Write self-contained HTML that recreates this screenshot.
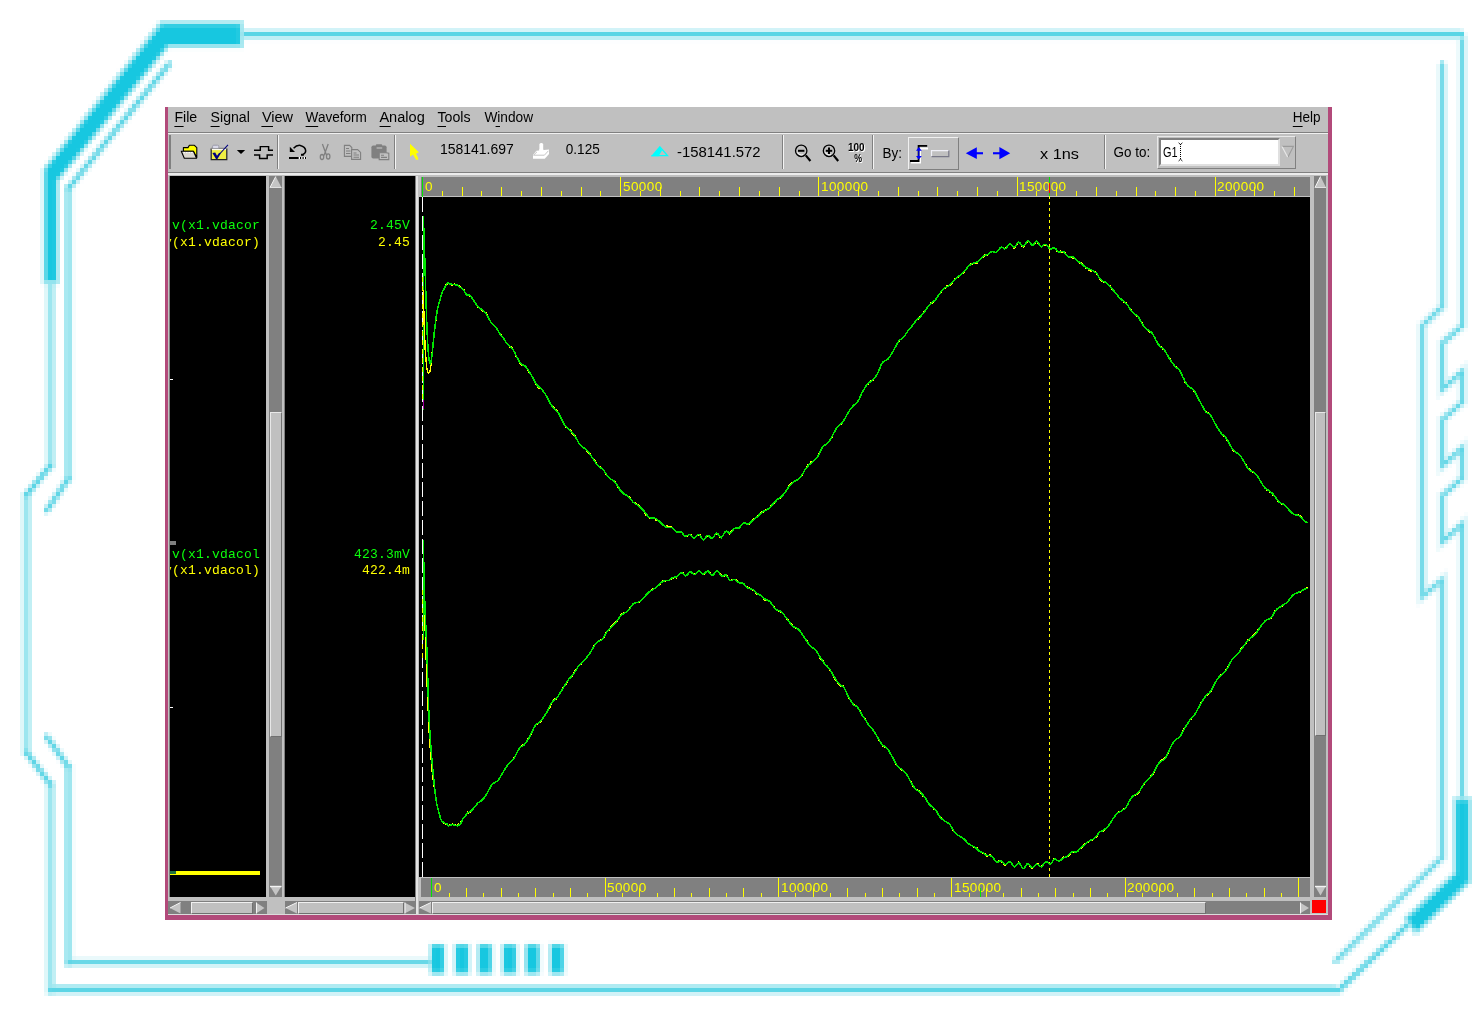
<!DOCTYPE html>
<html><head><meta charset="utf-8"><title>Waveform</title>
<style>html,body{margin:0;padding:0;background:#fff;}
body{width:1483px;height:1019px;position:relative;overflow:hidden;font-family:"Liberation Sans",sans-serif;}
.a{position:absolute;}
svg,.mono,.rl{will-change:transform;}
#win{left:165px;top:107px;width:1167px;height:813px;background:#b24a7a;}
#gray{left:168px;top:107px;width:1160px;height:808px;background:#c0c0c0;}
.menu{top:108px;font-size:14px;line-height:18px;color:#000;letter-spacing:0.55px;white-space:pre;}
.menu u{text-decoration:none;border-bottom:1px solid #000;}
.tb{font-size:13.5px;line-height:16px;color:#000;white-space:pre;letter-spacing:0.35px;}
.mono{font-family:"Liberation Mono",monospace;font-size:13px;line-height:15px;white-space:pre;letter-spacing:0.2px;}
.g{color:#0cff0c;}.y{color:#ffff00;}
.rl{font-size:13.5px;line-height:14px;color:#ffff00;white-space:pre;letter-spacing:0.4px;}
</style></head><body>
<svg class="a" style="left:0;top:0" width="1483" height="1019" viewBox="0 0 1483 1019">
<defs><filter id="pix" x="0" y="0" width="1484" height="1020" filterUnits="userSpaceOnUse" color-interpolation-filters="sRGB">
<feGaussianBlur in="SourceGraphic" stdDeviation="1.05" result="bl"/>
<feFlood x="1" y="1" width="1" height="1" flood-color="#000"/>
<feComposite width="4" height="4"/>
<feTile result="grid"/>
<feComposite in="bl" in2="grid" operator="in"/>
<feMorphology operator="dilate" radius="1" result="d"/>
<feOffset in="d" dx="1" dy="0" result="d1"/>
<feOffset in="d" dx="0" dy="1" result="d2"/>
<feOffset in="d" dx="1" dy="1" result="d3"/>
<feMerge><feMergeNode in="d"/><feMergeNode in="d1"/><feMergeNode in="d2"/><feMergeNode in="d3"/></feMerge>
</filter></defs>
<g filter="url(#pix)"><rect x="-8" y="-8" width="1500" height="1036" fill="#fff"/>
<polyline points="1462.0,36.0 1462.0,325.0 1462.0,325.0 1442.0,342.5 1442.0,388.5 1462.0,371.0 1462.0,401.5 1442.0,419.0 1442.0,465.0 1462.0,447.5 1462.0,477.5 1442.0,495.0 1442.0,541.0 1462.0,523.5 1462.0,800.0" fill="none" stroke="#e0f6fa" stroke-width="9.5" stroke-linejoin="miter" /><polyline points="1462.0,36.0 1462.0,325.0 1462.0,325.0 1442.0,342.5 1442.0,388.5 1462.0,371.0 1462.0,401.5 1442.0,419.0 1442.0,465.0 1462.0,447.5 1462.0,477.5 1442.0,495.0 1442.0,541.0 1462.0,523.5 1462.0,800.0" fill="none" stroke="#62d6e6" stroke-width="3.8" stroke-linejoin="miter" stroke-linecap="square"/>
<polyline points="240.0,34.0 1462.0,34.0" fill="none" stroke="#c6f0f6" stroke-width="11" stroke-linejoin="miter" /><polyline points="240.0,34.0 1462.0,34.0" fill="none" stroke="#4fd3e3" stroke-width="4" stroke-linejoin="miter" stroke-linecap="square"/>
<polyline points="1442.0,63.0 1442.0,306.0 1422.0,325.0 1422.0,595.6 1442.0,579.4 1442.0,856.6 1335.0,960.8" fill="none" stroke="#dcf5f9" stroke-width="9.5" stroke-linejoin="miter" /><polyline points="1442.0,63.0 1442.0,306.0 1422.0,325.0 1422.0,595.6 1442.0,579.4 1442.0,856.6 1335.0,960.8" fill="none" stroke="#6ad8e7" stroke-width="3.8" stroke-linejoin="miter" stroke-linecap="square"/>
<polyline points="50.0,280.0 50.0,465.0 26.0,494.5 26.0,752.0 50.0,784.0 50.0,990.0 1338.0,990.0 1408.0,923.5" fill="none" stroke="#cdf1f6" stroke-width="8.5" stroke-linejoin="miter" /><polyline points="50.0,280.0 50.0,465.0" fill="none" stroke="#9de6ef" stroke-width="7.2" stroke-linejoin="miter" stroke-linecap="square"/><polyline points="26.0,494.5 26.0,752.0" fill="none" stroke="#9de6ef" stroke-width="7.2" stroke-linejoin="miter" stroke-linecap="square"/><polyline points="50.0,784.0 50.0,990.0" fill="none" stroke="#9de6ef" stroke-width="7.2" stroke-linejoin="miter" stroke-linecap="square"/><polyline points="50.0,465.0 26.0,494.5" fill="none" stroke="#55d3e4" stroke-width="4" stroke-linejoin="miter" stroke-linecap="square"/><polyline points="26.0,752.0 50.0,784.0" fill="none" stroke="#55d3e4" stroke-width="4" stroke-linejoin="miter" stroke-linecap="square"/><polyline points="50.0,990.0 1338.0,990.0 1408.0,923.5" fill="none" stroke="#55d3e4" stroke-width="4" stroke-linejoin="miter" stroke-linecap="square"/>
<rect x="53" y="984" width="1282" height="4" fill="#a9e9f1"/>
<polyline points="169.0,63.0 68.0,188.0 68.0,478.0 45.7,510.7" fill="none" stroke="#cdf1f6" stroke-width="8.5" stroke-linejoin="miter" /><polyline points="68.0,188.0 68.0,478.0" fill="none" stroke="#9de6ef" stroke-width="7.2" stroke-linejoin="miter" stroke-linecap="square"/><polyline points="169.0,63.0 68.0,188.0" fill="none" stroke="#55d3e4" stroke-width="3.6" stroke-linejoin="miter" stroke-linecap="square"/><polyline points="68.0,478.0 45.7,510.7" fill="none" stroke="#55d3e4" stroke-width="3.6" stroke-linejoin="miter" stroke-linecap="square"/>
<polyline points="45.7,735.6 68.0,766.6 68.0,962.0 433.0,962.0" fill="none" stroke="#cdf1f6" stroke-width="8.5" stroke-linejoin="miter" /><polyline points="68.0,766.6 68.0,962.0" fill="none" stroke="#9de6ef" stroke-width="7.2" stroke-linejoin="miter" stroke-linecap="square"/><polyline points="45.7,735.6 68.0,766.6" fill="none" stroke="#55d3e4" stroke-width="3.6" stroke-linejoin="miter" stroke-linecap="square"/><polyline points="68.0,962.0 433.0,962.0" fill="none" stroke="#55d3e4" stroke-width="3.6" stroke-linejoin="miter" stroke-linecap="square"/>
<polygon points="243,20.5 159.5,20.5 42,168 42,284 58.5,284 58.5,181 168.5,47.5 243,47.5" fill="#9fe6ef"/>
<polygon points="239,24.5 161.5,24.5 45.5,169.5 45.5,280 55.5,280 55.5,179.5 167,44 239,44" fill="#17c7e0"/>
<polygon points="1452.8,796.8 1471,796.8 1471,882 1415.1,935.3 1402.4,917.6 1452.8,871.8" fill="#9fe6ef"/>
<polygon points="1456.3,800.5 1467.3,800.5 1467.3,880.4 1415.8,930 1407.4,918.4 1456.3,873.6" fill="#17c7e0"/>
<rect x="428.5" y="943" width="17" height="31" fill="#9fe6ef" opacity="0.7"/>
<rect x="431.5" y="943.5" width="11" height="30" fill="#52d6e6"/>
<rect x="431.5" y="947" width="11" height="23" fill="#17c7e0"/>
<rect x="453.0" y="943" width="17" height="31" fill="#9fe6ef" opacity="0.7"/>
<rect x="456.0" y="943.5" width="11" height="30" fill="#52d6e6"/>
<rect x="456.0" y="947" width="11" height="23" fill="#17c7e0"/>
<rect x="476.0" y="943" width="17" height="31" fill="#9fe6ef" opacity="0.7"/>
<rect x="479.0" y="943.5" width="11" height="30" fill="#52d6e6"/>
<rect x="479.0" y="947" width="11" height="23" fill="#17c7e0"/>
<rect x="500.5" y="943" width="17" height="31" fill="#9fe6ef" opacity="0.7"/>
<rect x="503.5" y="943.5" width="11" height="30" fill="#52d6e6"/>
<rect x="503.5" y="947" width="11" height="23" fill="#17c7e0"/>
<rect x="523.5" y="943" width="17" height="31" fill="#9fe6ef" opacity="0.7"/>
<rect x="526.5" y="943.5" width="11" height="30" fill="#52d6e6"/>
<rect x="526.5" y="947" width="11" height="23" fill="#17c7e0"/>
<rect x="548.0" y="943" width="17" height="31" fill="#9fe6ef" opacity="0.7"/>
<rect x="551.0" y="943.5" width="11" height="30" fill="#52d6e6"/>
<rect x="551.0" y="947" width="11" height="23" fill="#17c7e0"/>
</g>
</svg>
<div class="a" id="win"></div><div class="a" id="gray"></div>
<div class="a" style="left:168px;top:132px;width:1160px;height:1px;background:#808080;"></div>
<div class="a" style="left:168px;top:133px;width:1160px;height:1px;background:#f0f0f0;"></div>
<div class="a" style="left:168px;top:172px;width:1160px;height:1px;background:#808080;"></div>
<div class="a" style="left:168px;top:173px;width:1160px;height:2px;background:#ececec;"></div>
<div class="a" style="left:277px;top:135px;width:1px;height:34px;background:#808080;"></div>
<div class="a" style="left:278px;top:135px;width:1px;height:34px;background:#f4f4f4;"></div>
<div class="a" style="left:394px;top:135px;width:1px;height:34px;background:#808080;"></div>
<div class="a" style="left:395px;top:135px;width:1px;height:34px;background:#f4f4f4;"></div>
<div class="a" style="left:782px;top:135px;width:1px;height:34px;background:#808080;"></div>
<div class="a" style="left:783px;top:135px;width:1px;height:34px;background:#f4f4f4;"></div>
<div class="a" style="left:872px;top:135px;width:1px;height:34px;background:#808080;"></div>
<div class="a" style="left:873px;top:135px;width:1px;height:34px;background:#f4f4f4;"></div>
<div class="a" style="left:1104px;top:135px;width:1px;height:34px;background:#808080;"></div>
<div class="a" style="left:1105px;top:135px;width:1px;height:34px;background:#f4f4f4;"></div>
<div class="a" style="left:169px;top:135px;width:2px;height:34px;background:#808080;"></div>
<div class="a" style="left:1157px;top:136px;width:139px;height:33px;background:#c0c0c0;box-sizing:border-box;border:1px solid;border-color:#e8e8e8 #808080 #808080 #e8e8e8;"></div>
<div class="a" style="left:1159px;top:138px;width:121px;height:28px;background:#fff;box-sizing:border-box;border:2px solid;border-color:#808080 #e0e0e0 #e0e0e0 #808080;"></div>
<div class="a" style="left:908px;top:137px;width:51px;height:33px;background:#c0c0c0;box-sizing:border-box;border:1px solid;border-color:#f0f0f0 #808080 #808080 #f0f0f0;"></div>
<div class="a" style="left:170px;top:176px;width:96px;height:721px;background:#000;"></div>
<div class="a" style="left:169px;top:176px;width:1px;height:721px;background:#808080;"></div>
<div class="a" style="left:269px;top:176px;width:13px;height:721px;background:#808080;"></div>
<div class="a" style="left:270px;top:412px;width:12px;height:325px;background:#c0c0c0;box-sizing:border-box;border:1px solid;border-color:#e8e8e8 #707070 #707070 #e8e8e8;"></div>
<div class="a" style="left:285px;top:176px;width:130px;height:721px;background:#000;"></div>
<div class="a" style="left:284px;top:176px;width:1px;height:721px;background:#808080;"></div>
<div class="a" style="left:421px;top:177px;width:889px;height:19px;background:#808080;"></div>
<div class="a" style="left:421px;top:878px;width:889px;height:19px;background:#808080;"></div>
<div class="a" style="left:419px;top:197px;width:891px;height:680px;background:#000;"></div>
<div class="a" style="left:415px;top:176px;width:1px;height:739px;background:#808080;"></div>
<div class="a" style="left:416px;top:176px;width:2px;height:739px;background:#e4e4e4;"></div>
<div class="a" style="left:1314px;top:176px;width:12px;height:721px;background:#808080;"></div>
<div class="a" style="left:1315px;top:412px;width:11px;height:324px;background:#c0c0c0;box-sizing:border-box;border:1px solid;border-color:#e8e8e8 #707070 #707070 #e8e8e8;"></div>
<div class="a" style="left:168px;top:901px;width:99px;height:13px;background:#808080;"></div>
<div class="a" style="left:191px;top:902px;width:62px;height:12px;background:#c0c0c0;box-sizing:border-box;border:1px solid;border-color:#f0f0f0 #707070 #707070 #f0f0f0;"></div>
<div class="a" style="left:285px;top:901px;width:130px;height:13px;background:#808080;"></div>
<div class="a" style="left:298px;top:902px;width:106px;height:12px;background:#c0c0c0;box-sizing:border-box;border:1px solid;border-color:#f0f0f0 #707070 #707070 #f0f0f0;"></div>
<div class="a" style="left:419px;top:901px;width:891px;height:13px;background:#808080;"></div>
<div class="a" style="left:168px;top:914px;width:1160px;height:1px;background:#dcdcdc;"></div>
<div class="a" style="left:432px;top:902px;width:774px;height:12px;background:#c0c0c0;box-sizing:border-box;border:1px solid;border-color:#f0f0f0 #707070 #707070 #f0f0f0;"></div>
<div class="a" style="left:1312px;top:900px;width:14px;height:13px;background:#ff0000;"></div>
<div class="a" style="left:170px;top:871px;width:90px;height:4px;background:#ffff00;"></div>
<div class="a" style="left:170px;top:871px;width:6px;height:3px;background:#207040;"></div>
<div class="a" style="left:170px;top:541px;width:6px;height:4px;background:#808080;"></div>
<div class="a" style="left:170px;top:379px;width:3px;height:1px;background:#fff;"></div>
<div class="a" style="left:170px;top:707px;width:3px;height:1px;background:#fff;"></div>
<div class="a" style="left:170px;top:176px;width:96px;height:721px;overflow:hidden"><div class="a mono g" style="left:2px;top:42px">v(x1.vdacor</div><div class="a mono y" style="left:-6px;top:59px">v(x1.vdacor)</div><div class="a mono g" style="left:2px;top:371px">v(x1.vdacol</div><div class="a mono y" style="left:-6px;top:387px">v(x1.vdacol)</div></div>
<div class="a mono g" style="left:285px;width:125px;text-align:right;top:218px">2.45V</div>
<div class="a mono y" style="left:285px;width:125px;text-align:right;top:235px">2.45</div>
<div class="a mono g" style="left:285px;width:125px;text-align:right;top:547px">423.3mV</div>
<div class="a mono y" style="left:285px;width:125px;text-align:right;top:563px">422.4m</div>
<div class="a rl" style="left:424.5px;top:180px">0</div>
<div class="a rl" style="left:433.7px;top:881px">0</div>
<div class="a rl" style="left:622.7px;top:180px">50000</div>
<div class="a rl" style="left:607.1px;top:881px">50000</div>
<div class="a rl" style="left:820.9px;top:180px">100000</div>
<div class="a rl" style="left:780.5px;top:881px">100000</div>
<div class="a rl" style="left:1019.1px;top:180px">150000</div>
<div class="a rl" style="left:953.9px;top:881px">150000</div>
<div class="a rl" style="left:1217.3px;top:180px">200000</div>
<div class="a rl" style="left:1127.3px;top:881px">200000</div>
<svg class="a" style="left:0;top:0" width="1483" height="1019" viewBox="0 0 1483 1019">
<g shape-rendering="crispEdges" fill="none" stroke-linejoin="round">
<line x1="422.5" y1="197" x2="422.5" y2="877" stroke="#fff" stroke-width="1.2" stroke-dasharray="15 4"/>
<line x1="1049.5" y1="196" x2="1049.5" y2="877" stroke="#ffff00" stroke-width="1" stroke-dasharray="3 3"/>
<line x1="423.6" y1="216" x2="423.6" y2="410" stroke="#00e600" stroke-width="1.2"/>
<line x1="423.6" y1="541" x2="423.6" y2="640" stroke="#00e600" stroke-width="1.2"/>
<line x1="422.6" y1="277" x2="422.6" y2="400" stroke="#ffff00" stroke-width="1.2" stroke-dasharray="5 4"/>
<line x1="422.6" y1="590" x2="422.6" y2="660" stroke="#ffff00" stroke-width="1.2" stroke-dasharray="5 4"/>
<line x1="423" y1="400" x2="423" y2="409" stroke="#a000a0" stroke-width="1"/>
<polyline points="423.4,290 424,320 425.3,352 426.8,368 428.3,373.5 430,371.5 431.3,362 432.6,348 434.5,330 437,312" stroke="#ffff00" stroke-width="1.4"/>
<polyline points="424.2,600 425.5,640 427.3,690 429.5,740 432.5,775 436,800" stroke="#ffff00" stroke-width="1.4"/>
<polyline points="423.3,216.0 424.0,235.2 424.7,256.3 425.4,280.4 426.1,303.0 426.8,323.9 427.5,340.0 428.2,350.7 428.9,358.5 429.6,362.1 430.3,363.9 431.0,362.5 431.7,357.4 432.4,351.6 433.1,344.2 433.8,336.8 434.5,330.6 435.2,324.7 435.9,319.1 436.6,314.3 437.3,310.4 438.0,307.2 438.7,304.3 439.4,301.8 440.1,299.4 440.8,296.6 441.5,294.4 442.2,292.9 442.9,290.6 443.6,289.4 444.3,287.9 445.0,287.4 445.7,285.3 446.4,283.8 447.1,284.1 447.8,282.7 448.5,282.8 449.2,283.5 449.9,284.0 450.6,284.1 451.3,284.6 452.0,285.3 452.7,284.9 453.4,284.5 454.1,284.0 454.8,284.6 455.5,285.1 456.2,285.8 456.9,284.6 457.6,284.3 458.3,285.7 459.0,286.3 459.7,285.8 460.4,287.2 461.1,287.5 461.8,288.3 462.5,288.6 463.2,289.9 463.9,289.7 464.6,291.8 465.3,293.5 466.0,293.9 466.7,294.5 467.4,294.9 468.1,295.4 468.8,295.7 469.5,295.2 470.0,296.3 471.6,297.5 473.2,300.1 474.8,302.1 476.4,305.4 478.0,307.1 479.6,308.1 481.2,309.1 482.8,311.3 484.4,312.1 486.0,312.8 487.6,316.2 489.2,319.0 490.8,321.7 492.4,324.6 494.0,325.0 495.6,327.1 497.2,329.3 498.8,332.5 500.4,333.8 502.0,336.4 503.6,337.6 505.2,341.4 506.8,343.6 508.4,345.2 510.0,347.1 511.6,347.1 513.2,350.2 514.8,352.5 516.4,357.1 518.0,359.2 519.6,363.0 521.2,365.0 522.8,364.7 524.4,365.2 526.0,366.7 527.6,369.4 529.2,372.6 530.8,374.0 532.4,376.6 534.0,379.1 535.6,383.8 537.2,385.4 538.8,388.7 540.4,387.5 542.0,389.6 543.6,391.3 545.2,393.9 546.8,396.5 548.4,400.5 550.0,403.2 551.6,405.5 553.2,406.7 554.8,408.9 556.4,410.1 558.0,412.0 559.6,414.9 561.2,418.8 562.8,422.2 564.4,424.4 566.0,427.2 567.6,428.4 569.2,429.1 570.8,430.4 572.4,434.3 574.0,435.5 575.6,436.2 577.2,439.7 578.8,443.4 580.4,445.2 582.0,446.0 583.6,448.1 585.2,448.4 586.8,451.1 588.4,452.8 590.0,453.5 591.6,456.5 593.2,458.5 594.8,460.4 596.4,463.4 598.0,466.1 599.6,466.3 601.2,468.3 602.8,469.6 604.4,471.3 606.0,474.7 607.6,475.8 609.2,477.6 610.8,479.4 612.4,479.8 614.0,481.2 615.6,482.3 617.2,485.4 618.8,488.6 620.4,489.9 622.0,491.4 623.6,494.0 625.2,495.0 626.8,494.8 628.4,496.3 630.0,497.8 631.6,500.4 633.2,502.5 634.8,502.6 636.4,503.9 638.0,504.7 639.6,506.4 641.2,507.7 642.8,510.3 644.4,512.0 646.0,515.1 647.6,516.2 649.2,518.1 650.8,517.2 652.4,518.1 654.0,517.3 655.6,519.9 657.2,520.0 658.8,521.5 660.4,521.6 662.0,523.1 663.6,525.3 665.2,526.7 666.8,525.7 668.4,527.2 670.0,526.9 671.6,526.8 673.2,528.8 674.8,530.1 676.4,531.4 678.0,532.3 679.6,531.9 681.2,532.0 682.8,533.6 684.4,536.0 686.0,535.3 687.6,536.1 689.2,534.3 690.8,534.6 692.4,537.1 694.0,537.7 695.6,537.6 697.2,534.9 698.8,535.0 700.4,535.1 702.0,538.1 703.6,539.7 705.2,537.7 706.8,536.1 708.4,535.5 710.0,537.5 711.6,538.5 713.2,537.1 714.8,535.2 716.4,533.9 718.0,533.6 719.6,537.0 721.2,537.9 722.8,535.7 724.4,533.5 726.0,531.5 727.6,531.6 729.2,534.2 730.8,531.7 732.4,530.5 734.0,528.6 735.6,527.7 737.2,527.4 738.8,528.3 740.4,526.1 742.0,525.1 743.6,522.2 745.2,522.7 746.8,523.5 748.4,524.8 750.0,523.2 751.6,521.7 753.2,519.3 754.8,518.7 756.4,517.0 758.0,515.9 759.6,515.0 761.2,511.7 762.8,512.4 764.4,511.6 766.0,509.2 767.6,509.5 769.2,508.1 770.8,506.0 772.4,504.8 774.0,503.5 775.6,501.5 777.2,499.2 778.8,498.9 780.4,498.1 782.0,495.9 783.6,494.1 785.2,492.2 786.8,490.1 788.4,486.5 790.0,484.8 791.6,482.8 793.2,482.5 794.8,480.4 796.4,480.8 798.0,479.8 799.6,477.6 801.2,476.1 802.8,474.1 804.4,470.7 806.0,468.6 807.6,465.1 809.2,464.9 810.8,461.7 812.4,461.8 814.0,461.0 815.6,458.2 817.2,457.3 818.8,453.8 820.4,451.7 822.0,448.1 823.6,446.4 825.2,445.0 826.8,444.1 828.4,442.2 830.0,439.0 831.6,438.2 833.2,433.9 834.8,431.6 836.4,427.7 838.0,426.2 839.6,424.8 841.2,424.1 842.8,421.6 844.4,419.6 846.0,416.4 847.6,413.1 849.2,410.9 850.8,408.4 852.4,407.1 854.0,405.3 855.6,404.4 857.2,401.9 858.8,399.9 860.4,396.4 862.0,392.8 863.6,390.7 865.2,387.5 866.8,384.9 868.4,383.8 870.0,381.5 871.6,380.4 873.2,380.3 874.8,377.6 876.4,374.6 878.0,373.0 879.6,369.2 881.2,364.3 882.8,362.2 884.4,360.9 886.0,360.5 887.6,359.3 889.2,357.9 890.8,355.3 892.4,352.2 894.0,350.0 895.6,346.4 897.2,343.5 898.8,341.8 900.4,339.5 902.0,338.6 903.6,336.7 905.2,335.1 906.8,333.0 908.4,329.6 910.0,328.5 911.6,326.5 913.2,324.1 914.8,322.2 916.4,320.4 918.0,319.3 919.6,316.9 921.2,315.1 922.8,313.2 924.4,311.5 926.0,309.0 927.6,307.1 929.2,304.8 930.8,303.1 932.4,303.7 934.0,301.7 935.6,300.0 937.2,297.6 938.8,295.0 940.4,293.3 942.0,291.0 943.6,288.7 945.2,288.3 946.8,285.7 948.4,286.2 950.0,285.6 951.6,284.0 953.2,281.5 954.8,278.7 956.4,277.8 958.0,277.3 959.6,276.1 961.2,274.2 962.8,273.4 964.4,271.9 966.0,269.5 967.6,267.3 969.2,265.9 970.8,263.8 972.4,264.1 974.0,263.0 975.6,263.1 977.2,263.1 978.8,260.6 980.4,259.4 982.0,257.5 983.6,256.9 985.2,254.3 986.8,255.4 988.4,254.6 990.0,252.6 991.6,251.6 993.2,251.7 994.8,252.5 996.4,252.5 998.0,251.0 999.6,248.2 1001.2,246.8 1002.8,247.4 1004.4,249.6 1006.0,247.5 1007.6,246.2 1009.2,244.4 1010.8,244.1 1012.4,246.0 1014.0,248.6 1015.6,246.3 1017.2,244.1 1018.8,242.0 1020.4,243.9 1022.0,246.1 1023.6,247.2 1025.2,243.9 1026.8,242.5 1028.4,241.0 1030.0,242.6 1031.6,244.1 1033.2,245.5 1034.8,243.9 1036.4,241.3 1038.0,243.2 1039.6,244.9 1041.2,246.8 1042.8,246.2 1044.4,244.8 1046.0,244.9 1047.6,246.0 1049.2,249.0 1050.8,248.9 1052.4,247.8 1054.0,248.4 1055.6,249.0 1057.2,251.5 1058.8,252.0 1060.4,251.0 1062.0,252.3 1063.6,252.0 1065.2,252.7 1066.8,255.3 1068.4,256.3 1070.0,256.9 1071.6,257.4 1073.2,258.3 1074.8,258.3 1076.4,260.0 1078.0,261.1 1079.6,263.1 1081.2,262.9 1082.8,263.8 1084.4,265.8 1086.0,268.2 1087.6,267.9 1089.2,270.6 1090.8,271.1 1092.4,270.5 1094.0,271.1 1095.6,271.7 1097.2,274.4 1098.8,277.1 1100.4,279.8 1102.0,281.1 1103.6,281.9 1105.2,282.4 1106.8,283.2 1108.4,284.8 1110.0,285.6 1111.6,288.8 1113.2,290.8 1114.8,292.1 1116.4,293.5 1118.0,296.4 1119.6,298.2 1121.2,299.8 1122.8,300.4 1124.4,302.7 1126.0,302.7 1127.6,305.2 1129.2,307.7 1130.8,308.9 1132.4,312.3 1134.0,313.1 1135.6,315.8 1137.2,315.9 1138.8,317.0 1140.4,320.8 1142.0,322.8 1143.6,326.1 1145.2,327.8 1146.8,329.4 1148.4,330.9 1150.0,332.4 1151.6,332.3 1153.2,334.8 1154.8,337.2 1156.4,341.1 1158.0,344.6 1159.6,346.4 1161.2,346.2 1162.8,349.3 1164.4,349.4 1166.0,352.6 1167.6,355.5 1169.2,357.2 1170.8,359.8 1172.4,363.0 1174.0,365.3 1175.6,366.9 1177.2,367.4 1178.8,369.0 1180.4,371.9 1182.0,375.3 1183.6,378.1 1185.2,382.5 1186.8,384.7 1188.4,385.8 1190.0,387.2 1191.6,388.0 1193.2,390.0 1194.8,392.2 1196.4,395.5 1198.0,398.4 1199.6,400.2 1201.2,404.0 1202.8,406.8 1204.4,409.5 1206.0,411.9 1207.6,412.8 1209.2,413.2 1210.8,415.3 1212.4,418.3 1214.0,421.9 1215.6,424.2 1217.2,426.7 1218.8,429.3 1220.4,431.7 1222.0,434.3 1223.6,435.7 1225.2,437.2 1226.8,440.5 1228.4,440.6 1230.0,445.0 1231.6,447.4 1233.2,450.6 1234.8,451.7 1236.4,452.5 1238.0,453.7 1239.6,455.7 1241.2,457.0 1242.8,459.1 1244.4,462.0 1246.0,464.5 1247.6,468.0 1249.2,468.7 1250.8,470.6 1252.4,472.2 1254.0,472.9 1255.6,474.1 1257.2,475.7 1258.8,478.3 1260.4,481.3 1262.0,483.1 1263.6,486.5 1265.2,488.0 1266.8,490.0 1268.4,489.9 1270.0,492.5 1271.6,492.5 1273.2,495.6 1274.8,495.8 1276.4,498.1 1278.0,501.2 1279.6,502.3 1281.2,504.0 1282.8,503.8 1284.4,505.3 1286.0,506.9 1287.6,507.7 1289.2,510.6 1290.8,512.3 1292.4,513.0 1294.0,514.6 1295.6,515.0 1297.2,515.6 1298.8,515.0 1300.4,516.0 1302.0,517.7 1303.6,519.7 1305.2,521.1 1306.8,521.9 1308.4,523.3" stroke="#ffff00" stroke-width="1.3"/>
<polyline points="423.3,540.0 424.0,575.2 424.7,600.3 425.4,617.9 426.1,632.8 426.8,648.7 427.5,669.7 428.2,694.3 428.9,714.8 429.6,728.2 430.3,739.4 431.0,748.9 431.7,757.3 432.4,765.1 433.1,772.7 433.8,780.1 434.5,787.1 435.2,793.3 435.9,798.7 436.6,803.1 437.3,806.3 438.0,809.0 438.7,811.6 439.4,813.9 440.1,816.6 440.8,818.7 441.5,819.9 442.2,821.5 442.9,822.8 443.6,823.2 444.3,822.9 445.0,823.6 445.7,824.4 446.4,824.3 447.1,823.9 447.8,825.0 448.5,826.3 449.2,825.9 449.9,824.9 450.6,824.5 451.3,825.3 452.0,824.2 452.7,824.1 453.4,824.6 454.1,824.8 454.8,824.7 455.5,825.1 456.2,825.4 456.9,825.2 457.6,826.0 458.3,824.1 459.0,825.3 459.7,825.1 460.4,824.2 461.1,821.7 461.8,820.8 462.5,819.4 463.2,818.8 463.9,817.6 464.6,816.7 465.3,815.8 466.0,815.0 466.7,813.9 467.4,812.0 468.1,812.4 468.8,813.5 469.5,811.8 470.0,812.2 471.6,811.3 473.2,809.2 474.8,806.5 476.4,805.1 478.0,802.7 479.6,801.7 481.2,800.6 482.8,798.7 484.4,797.6 486.0,795.1 487.6,792.5 489.2,789.3 490.8,786.6 492.4,783.6 494.0,783.5 495.6,781.5 497.2,781.4 498.8,779.4 500.4,776.4 502.0,773.9 503.6,771.4 505.2,768.1 506.8,765.8 508.4,764.8 510.0,762.4 511.6,761.2 513.2,758.8 514.8,756.6 516.4,753.7 518.0,750.1 519.6,748.4 521.2,746.8 522.8,744.8 524.4,745.0 526.0,742.4 527.6,739.0 529.2,737.9 530.8,734.8 532.4,731.6 534.0,727.9 535.6,724.9 537.2,724.0 538.8,722.7 540.4,722.0 542.0,719.7 543.6,717.1 545.2,715.0 546.8,712.4 548.4,709.0 550.0,707.3 551.6,703.0 553.2,699.8 554.8,698.9 556.4,699.0 558.0,696.2 559.6,693.5 561.2,690.9 562.8,688.3 564.4,685.2 566.0,684.2 567.6,681.1 569.2,678.3 570.8,678.1 572.4,675.9 574.0,672.7 575.6,669.9 577.2,667.9 578.8,665.5 580.4,664.8 582.0,663.0 583.6,660.9 585.2,659.7 586.8,657.8 588.4,654.9 590.0,652.6 591.6,650.5 593.2,647.2 594.8,644.5 596.4,642.9 598.0,641.9 599.6,641.0 601.2,639.6 602.8,638.6 604.4,636.6 606.0,632.5 607.6,630.7 609.2,630.0 610.8,626.9 612.4,625.5 614.0,623.1 615.6,622.0 617.2,621.4 618.8,618.1 620.4,615.4 622.0,613.9 623.6,612.6 625.2,612.8 626.8,611.6 628.4,609.8 630.0,607.6 631.6,605.6 633.2,603.3 634.8,603.4 636.4,602.8 638.0,602.5 639.6,601.9 641.2,600.5 642.8,598.9 644.4,597.5 646.0,595.1 647.6,594.1 649.2,592.3 650.8,591.0 652.4,588.9 654.0,588.4 655.6,587.8 657.2,585.8 658.8,585.2 660.4,583.9 662.0,581.6 663.6,580.3 665.2,581.1 666.8,580.6 668.4,580.7 670.0,579.2 671.6,579.3 673.2,578.3 674.8,577.2 676.4,577.9 678.0,575.5 679.6,573.9 681.2,572.9 682.8,572.5 684.4,575.1 686.0,575.7 687.6,574.1 689.2,572.2 690.8,572.2 692.4,573.5 694.0,574.4 695.6,573.2 697.2,572.4 698.8,570.4 700.4,571.5 702.0,574.0 703.6,574.6 705.2,572.9 706.8,571.3 708.4,570.5 710.0,572.4 711.6,575.8 713.2,575.5 714.8,573.3 716.4,570.6 718.0,571.3 719.6,573.6 721.2,574.8 722.8,576.1 724.4,576.4 726.0,574.4 727.6,576.7 729.2,579.5 730.8,580.7 732.4,579.2 734.0,579.2 735.6,579.8 737.2,580.5 738.8,581.7 740.4,583.6 742.0,582.7 743.6,583.5 745.2,585.4 746.8,586.8 748.4,587.5 750.0,588.1 751.6,589.8 753.2,589.9 754.8,590.9 756.4,594.3 758.0,593.5 759.6,594.3 761.2,595.8 762.8,597.3 764.4,600.0 766.0,599.9 767.6,600.5 769.2,600.4 770.8,602.8 772.4,604.6 774.0,606.8 775.6,608.9 777.2,610.2 778.8,611.6 780.4,611.8 782.0,612.6 783.6,614.1 785.2,616.7 786.8,619.3 788.4,620.1 790.0,622.8 791.6,623.8 793.2,627.1 794.8,627.4 796.4,628.3 798.0,629.0 799.6,630.7 801.2,632.4 802.8,634.8 804.4,637.4 806.0,640.4 807.6,641.3 809.2,644.4 810.8,646.5 812.4,647.7 814.0,648.1 815.6,650.4 817.2,651.8 818.8,655.2 820.4,659.2 822.0,659.8 823.6,661.2 825.2,664.9 826.8,665.8 828.4,667.8 830.0,670.2 831.6,671.7 833.2,674.9 834.8,679.2 836.4,680.6 838.0,683.5 839.6,684.9 841.2,686.3 842.8,685.4 844.4,687.5 846.0,691.6 847.6,695.3 849.2,698.4 850.8,700.8 852.4,702.8 854.0,704.3 855.6,705.8 857.2,707.2 858.8,709.2 860.4,711.2 862.0,714.6 863.6,717.6 865.2,718.5 866.8,721.9 868.4,725.1 870.0,726.1 871.6,727.6 873.2,730.4 874.8,732.5 876.4,735.2 878.0,737.9 879.6,741.5 881.2,743.2 882.8,746.0 884.4,746.7 886.0,747.8 887.6,749.0 889.2,751.6 890.8,754.2 892.4,757.5 894.0,760.3 895.6,763.9 897.2,766.1 898.8,767.8 900.4,768.6 902.0,770.1 903.6,771.3 905.2,773.0 906.8,773.8 908.4,777.5 910.0,780.4 911.6,782.6 913.2,786.9 914.8,788.3 916.4,789.3 918.0,790.5 919.6,791.0 921.2,793.9 922.8,796.0 924.4,797.0 926.0,798.1 927.6,801.8 929.2,804.7 930.8,806.0 932.4,806.7 934.0,809.1 935.6,809.4 937.2,812.4 938.8,815.5 940.4,817.2 942.0,818.9 943.6,820.4 945.2,821.3 946.8,822.6 948.4,823.5 950.0,824.7 951.6,827.1 953.2,830.7 954.8,832.1 956.4,833.5 958.0,835.4 959.6,836.3 961.2,836.3 962.8,838.1 964.4,839.8 966.0,841.5 967.6,842.6 969.2,844.2 970.8,845.6 972.4,845.5 974.0,847.2 975.6,847.2 977.2,847.9 978.8,851.8 980.4,851.4 982.0,852.7 983.6,853.5 985.2,854.0 986.8,856.1 988.4,855.5 990.0,854.8 991.6,855.7 993.2,857.9 994.8,859.7 996.4,861.7 998.0,861.8 999.6,860.4 1001.2,861.8 1002.8,862.5 1004.4,865.0 1006.0,864.9 1007.6,862.7 1009.2,861.7 1010.8,862.7 1012.4,864.3 1014.0,866.8 1015.6,866.2 1017.2,864.0 1018.8,862.1 1020.4,863.7 1022.0,867.7 1023.6,868.4 1025.2,867.3 1026.8,863.6 1028.4,864.0 1030.0,866.1 1031.6,868.5 1033.2,867.9 1034.8,865.6 1036.4,863.9 1038.0,863.9 1039.6,866.7 1041.2,866.9 1042.8,864.6 1044.4,863.2 1046.0,861.9 1047.6,861.7 1049.2,863.9 1050.8,863.5 1052.4,862.1 1054.0,858.9 1055.6,859.6 1057.2,860.4 1058.8,861.1 1060.4,860.1 1062.0,859.2 1063.6,857.1 1065.2,857.3 1066.8,856.7 1068.4,855.9 1070.0,854.5 1071.6,851.7 1073.2,852.3 1074.8,852.4 1076.4,852.5 1078.0,851.3 1079.6,849.1 1081.2,848.5 1082.8,846.0 1084.4,843.5 1086.0,844.1 1087.6,842.4 1089.2,841.6 1090.8,839.9 1092.4,840.1 1094.0,838.4 1095.6,837.6 1097.2,836.2 1098.8,832.4 1100.4,831.7 1102.0,831.8 1103.6,831.0 1105.2,828.6 1106.8,827.3 1108.4,826.2 1110.0,823.1 1111.6,820.8 1113.2,818.6 1114.8,816.2 1116.4,814.6 1118.0,812.5 1119.6,811.6 1121.2,811.6 1122.8,809.3 1124.4,808.8 1126.0,807.4 1127.6,804.6 1129.2,801.2 1130.8,798.2 1132.4,797.1 1134.0,795.3 1135.6,795.0 1137.2,794.2 1138.8,793.3 1140.4,789.8 1142.0,787.7 1143.6,784.8 1145.2,782.0 1146.8,781.0 1148.4,779.1 1150.0,777.3 1151.6,774.8 1153.2,774.2 1154.8,770.2 1156.4,767.4 1158.0,764.0 1159.6,762.6 1161.2,760.2 1162.8,759.5 1164.4,757.8 1166.0,756.9 1167.6,754.0 1169.2,750.5 1170.8,746.5 1172.4,743.6 1174.0,741.9 1175.6,740.2 1177.2,738.6 1178.8,738.1 1180.4,736.6 1182.0,732.8 1183.6,729.1 1185.2,726.7 1186.8,724.8 1188.4,722.0 1190.0,719.7 1191.6,718.8 1193.2,715.8 1194.8,714.1 1196.4,712.0 1198.0,708.2 1199.6,705.6 1201.2,701.6 1202.8,700.3 1204.4,698.1 1206.0,695.9 1207.6,694.7 1209.2,693.1 1210.8,691.7 1212.4,688.3 1214.0,686.1 1215.6,681.9 1217.2,679.4 1218.8,678.2 1220.4,675.3 1222.0,674.1 1223.6,672.7 1225.2,670.7 1226.8,669.0 1228.4,665.8 1230.0,663.3 1231.6,659.8 1233.2,658.5 1234.8,656.8 1236.4,654.9 1238.0,653.6 1239.6,651.9 1241.2,648.1 1242.8,646.8 1244.4,645.2 1246.0,643.6 1247.6,639.7 1249.2,640.1 1250.8,637.5 1252.4,635.7 1254.0,634.8 1255.6,633.2 1257.2,631.2 1258.8,628.6 1260.4,627.1 1262.0,624.6 1263.6,623.3 1265.2,620.7 1266.8,619.8 1268.4,619.1 1270.0,619.0 1271.6,617.7 1273.2,615.0 1274.8,610.9 1276.4,610.4 1278.0,608.2 1279.6,607.4 1281.2,606.5 1282.8,605.7 1284.4,604.2 1286.0,603.6 1287.6,601.3 1289.2,600.0 1290.8,597.7 1292.4,595.9 1294.0,594.8 1295.6,593.5 1297.2,593.1 1298.8,592.3 1300.4,591.9 1302.0,590.9 1303.6,589.9 1305.2,589.7 1306.8,587.7 1308.4,587.8" stroke="#ffff00" stroke-width="1.3"/>
<polyline points="423.3,216.0 424.0,235.2 424.7,256.3 425.4,280.4 426.1,303.0 426.8,323.9 427.5,340.0 428.2,350.7 428.9,358.5 429.6,362.1 430.3,363.9 431.0,362.5 431.7,357.4 432.4,351.6 433.1,344.2 433.8,336.8 434.5,330.6 435.2,324.7 435.9,319.1 436.6,314.3 437.3,310.4 438.0,307.2 438.7,304.3 439.4,301.8 440.1,299.5 440.8,297.0 441.5,294.9 442.2,292.8 442.9,290.9 443.6,289.5 444.3,288.5 445.0,287.2 445.7,285.9 446.4,284.8 447.1,283.7 447.8,283.1 448.5,283.0 449.2,283.5 449.9,284.1 450.6,284.0 451.3,284.2 452.0,284.4 452.7,284.3 453.4,284.4 454.1,284.4 454.8,284.6 455.5,285.0 456.2,284.8 456.9,284.8 457.6,285.4 458.3,286.0 459.0,286.6 459.7,287.0 460.4,287.5 461.1,287.6 461.8,288.2 462.5,288.9 463.2,289.6 463.9,290.3 464.6,291.7 465.3,293.1 466.0,294.0 466.7,295.0 467.4,295.2 468.1,294.8 468.8,294.9 469.5,294.9 470.0,295.4 471.6,297.5 473.2,299.6 474.8,302.2 476.4,304.8 478.0,306.8 479.6,308.3 481.2,309.2 482.8,310.3 484.4,311.7 486.0,313.6 487.6,316.5 489.2,319.2 490.8,322.0 492.4,324.4 494.0,325.5 495.6,327.1 497.2,329.3 498.8,331.9 500.4,334.5 502.0,336.5 503.6,338.5 505.2,341.0 506.8,343.4 508.4,345.2 510.0,346.8 511.6,348.1 513.2,350.0 514.8,352.8 516.4,356.2 518.0,359.0 519.6,362.0 521.2,364.0 522.8,365.0 524.4,365.5 526.0,367.0 527.6,369.1 529.2,371.7 530.8,374.4 532.4,376.7 534.0,380.0 535.6,383.0 537.2,385.2 538.8,387.0 540.4,387.9 542.0,389.7 543.6,391.7 545.2,393.8 546.8,396.6 548.4,400.0 550.0,403.2 551.6,405.6 553.2,407.3 554.8,409.0 556.4,410.5 558.0,412.2 559.6,415.2 561.2,418.4 562.8,421.5 564.4,424.8 566.0,426.8 567.6,428.2 569.2,429.7 570.8,431.0 572.4,433.2 574.0,434.8 575.6,437.1 577.2,440.0 578.8,443.1 580.4,445.3 582.0,446.7 583.6,447.8 585.2,448.6 586.8,450.1 588.4,451.9 590.0,454.3 591.6,456.6 593.2,458.9 594.8,461.5 596.4,463.8 598.0,465.9 599.6,467.1 601.2,468.1 602.8,469.6 604.4,471.3 606.0,473.8 607.6,476.4 609.2,478.0 610.8,479.1 612.4,479.9 614.0,481.0 615.6,482.8 617.2,485.2 618.8,487.7 620.4,490.5 622.0,491.9 623.6,493.6 625.2,494.9 626.8,495.2 628.4,496.7 630.0,498.1 631.6,500.2 633.2,502.4 634.8,503.4 636.4,504.4 638.0,505.3 639.6,506.7 641.2,508.2 642.8,509.7 644.4,511.5 646.0,513.8 647.6,515.8 649.2,517.4 650.8,518.2 652.4,518.1 654.0,518.1 655.6,518.5 657.2,519.4 658.8,520.9 660.4,522.4 662.0,524.1 663.6,525.4 665.2,526.7 666.8,527.4 668.4,527.5 670.0,527.4 671.6,527.6 673.2,528.4 674.8,530.3 676.4,532.0 678.0,532.3 679.6,531.9 681.2,532.1 682.8,533.7 684.4,535.7 686.0,536.3 687.6,535.4 689.2,534.3 690.8,534.9 692.4,536.7 694.0,538.0 695.6,537.2 697.2,534.9 698.8,534.4 700.4,535.9 702.0,538.8 703.6,539.9 705.2,538.0 706.8,535.9 708.4,535.3 710.0,537.1 711.6,538.7 713.2,537.7 714.8,535.1 716.4,533.0 718.0,534.0 719.6,536.4 721.2,537.8 722.8,535.8 724.4,532.5 726.0,531.1 727.6,531.6 729.2,533.1 730.8,532.8 732.4,530.8 734.0,528.5 735.6,528.0 737.2,528.3 738.8,528.2 740.4,526.6 742.0,524.4 743.6,523.0 745.2,522.9 746.8,524.0 748.4,524.2 750.0,523.1 751.6,521.4 753.2,520.0 754.8,518.6 756.4,517.6 758.0,516.2 759.6,514.3 761.2,513.1 762.8,511.7 764.4,510.8 766.0,510.2 767.6,509.3 769.2,508.3 770.8,506.7 772.4,504.6 774.0,502.9 775.6,501.4 777.2,499.5 778.8,498.5 780.4,497.5 782.0,496.1 783.6,494.2 785.2,492.1 786.8,489.7 788.4,487.3 790.0,485.5 791.6,483.6 793.2,482.5 794.8,481.2 796.4,480.4 798.0,479.4 799.6,477.9 801.2,476.0 802.8,473.7 804.4,470.7 806.0,468.4 807.6,466.4 809.2,464.5 810.8,463.4 812.4,462.0 814.0,460.5 815.6,459.0 817.2,457.4 818.8,454.7 820.4,451.4 822.0,448.1 823.6,445.9 825.2,444.8 826.8,444.1 828.4,442.1 830.0,440.1 831.6,437.3 833.2,434.2 834.8,431.3 836.4,428.5 838.0,426.3 839.6,425.2 841.2,423.7 842.8,422.2 844.4,419.5 846.0,416.7 847.6,413.6 849.2,411.0 850.8,408.7 852.4,406.7 854.0,404.9 855.6,404.3 857.2,402.6 858.8,399.8 860.4,396.3 862.0,392.6 863.6,390.2 865.2,387.2 866.8,385.0 868.4,382.9 870.0,382.1 871.6,380.9 873.2,379.5 874.8,378.1 876.4,375.5 878.0,372.7 879.6,368.8 881.2,364.7 882.8,362.1 884.4,360.9 886.0,360.2 887.6,359.4 889.2,357.7 890.8,355.1 892.4,352.3 894.0,349.5 895.6,346.7 897.2,343.6 898.8,341.1 900.4,339.5 902.0,338.6 903.6,336.9 905.2,335.1 906.8,332.6 908.4,330.1 910.0,328.5 911.6,326.6 913.2,324.5 914.8,322.3 916.4,320.2 918.0,318.8 919.6,317.7 921.2,315.7 922.8,313.9 924.4,311.7 926.0,309.9 927.6,307.1 929.2,305.0 930.8,303.3 932.4,302.3 934.0,301.0 935.6,299.7 937.2,297.5 938.8,294.9 940.4,292.6 942.0,290.6 943.6,289.0 945.2,287.7 946.8,286.9 948.4,285.9 950.0,284.8 951.6,283.1 953.2,281.1 954.8,279.3 956.4,278.1 958.0,276.8 959.6,275.6 961.2,274.2 962.8,272.7 964.4,271.2 966.0,269.4 967.6,267.3 969.2,265.6 970.8,264.6 972.4,263.6 974.0,263.0 975.6,262.7 977.2,262.0 978.8,260.8 980.4,259.2 982.0,257.3 983.6,255.9 985.2,255.2 986.8,255.0 988.4,254.0 990.0,252.7 991.6,251.7 993.2,251.6 994.8,252.5 996.4,252.5 998.0,250.8 999.6,248.3 1001.2,247.0 1002.8,247.6 1004.4,248.8 1006.0,248.4 1007.6,246.0 1009.2,244.0 1010.8,244.2 1012.4,246.2 1014.0,247.2 1015.6,246.0 1017.2,243.4 1018.8,242.0 1020.4,243.3 1022.0,245.7 1023.6,246.3 1025.2,244.4 1026.8,241.5 1028.4,240.8 1030.0,242.7 1031.6,244.8 1033.2,245.1 1034.8,243.0 1036.4,241.2 1038.0,242.3 1039.6,245.3 1041.2,247.0 1042.8,246.1 1044.4,244.3 1046.0,244.3 1047.6,246.0 1049.2,248.4 1050.8,249.4 1052.4,248.3 1054.0,247.6 1055.6,248.5 1057.2,250.7 1058.8,252.1 1060.4,252.0 1062.0,251.3 1063.6,251.6 1065.2,253.3 1066.8,255.4 1068.4,256.8 1070.0,257.1 1071.6,256.6 1073.2,257.1 1074.8,258.2 1076.4,259.8 1078.0,261.2 1079.6,262.5 1081.2,263.7 1082.8,264.9 1084.4,266.3 1086.0,267.5 1087.6,268.3 1089.2,269.2 1090.8,269.7 1092.4,270.5 1094.0,271.5 1095.6,272.5 1097.2,274.1 1098.8,277.0 1100.4,279.2 1102.0,280.6 1103.6,281.6 1105.2,281.9 1106.8,283.1 1108.4,284.5 1110.0,286.4 1111.6,288.3 1113.2,290.2 1114.8,292.0 1116.4,294.1 1118.0,296.0 1119.6,297.8 1121.2,299.2 1122.8,300.7 1124.4,301.9 1126.0,303.2 1127.6,305.2 1129.2,307.7 1130.8,310.0 1132.4,312.1 1134.0,313.8 1135.6,314.8 1137.2,315.6 1138.8,317.6 1140.4,320.6 1142.0,323.3 1143.6,325.9 1145.2,327.9 1146.8,329.1 1148.4,330.2 1150.0,331.4 1151.6,332.5 1153.2,334.7 1154.8,337.8 1156.4,341.0 1158.0,344.1 1159.6,345.7 1161.2,347.3 1162.8,348.4 1164.4,350.2 1166.0,352.6 1167.6,355.5 1169.2,358.2 1170.8,360.8 1172.4,363.1 1174.0,365.1 1175.6,366.8 1177.2,368.2 1178.8,369.2 1180.4,371.6 1182.0,375.2 1183.6,378.4 1185.2,381.7 1186.8,384.6 1188.4,386.4 1190.0,387.4 1191.6,388.3 1193.2,389.6 1194.8,391.8 1196.4,394.6 1198.0,397.8 1199.6,401.0 1201.2,403.9 1202.8,406.8 1204.4,409.7 1206.0,412.2 1207.6,413.0 1209.2,414.0 1210.8,415.6 1212.4,418.2 1214.0,421.4 1215.6,424.3 1217.2,427.2 1218.8,429.7 1220.4,432.2 1222.0,434.1 1223.6,435.5 1225.2,437.1 1226.8,439.1 1228.4,441.5 1230.0,445.1 1231.6,447.7 1233.2,449.8 1234.8,451.5 1236.4,452.6 1238.0,453.5 1239.6,455.0 1241.2,457.1 1242.8,459.8 1244.4,462.3 1246.0,465.2 1247.6,467.9 1249.2,469.8 1250.8,471.0 1252.4,471.6 1254.0,472.1 1255.6,474.0 1257.2,475.8 1258.8,478.0 1260.4,481.2 1262.0,483.5 1263.6,486.2 1265.2,488.2 1266.8,489.4 1268.4,490.3 1270.0,491.6 1271.6,492.5 1273.2,494.3 1274.8,496.4 1276.4,498.5 1278.0,500.8 1279.6,502.6 1281.2,503.3 1282.8,504.0 1284.4,504.9 1286.0,506.7 1287.6,508.4 1289.2,510.2 1290.8,511.8 1292.4,513.4 1294.0,514.4 1295.6,515.0 1297.2,515.2 1298.8,515.5 1300.4,516.6 1302.0,518.0 1303.6,520.3 1305.2,521.7 1306.8,522.5 1308.4,522.5" stroke="#00e600" stroke-width="1.55"/>
<polyline points="423.3,540.0 424.0,575.2 424.7,600.3 425.4,617.9 426.1,632.8 426.8,648.7 427.5,669.7 428.2,694.3 428.9,714.8 429.6,728.2 430.3,739.4 431.0,748.9 431.7,757.3 432.4,765.1 433.1,772.7 433.8,780.1 434.5,787.1 435.2,793.3 435.9,798.7 436.6,803.1 437.3,806.3 438.0,809.0 438.7,811.6 439.4,813.9 440.1,816.9 440.8,819.0 441.5,820.4 442.2,821.5 442.9,822.1 443.6,822.3 444.3,822.9 445.0,823.4 445.7,823.5 446.4,823.7 447.1,824.1 447.8,825.2 448.5,825.8 449.2,825.7 449.9,825.4 450.6,824.9 451.3,824.8 452.0,824.6 452.7,824.5 453.4,824.7 454.1,824.9 454.8,825.2 455.5,825.4 456.2,825.5 456.9,825.6 457.6,825.8 458.3,825.3 459.0,825.0 459.7,824.6 460.4,823.8 461.1,822.9 461.8,821.2 462.5,819.4 463.2,818.3 463.9,817.5 464.6,816.8 465.3,816.1 466.0,814.9 466.7,813.7 467.4,812.8 468.1,812.6 468.8,812.7 469.5,812.3 470.0,811.7 471.6,810.5 473.2,808.8 474.8,806.8 476.4,804.6 478.0,802.9 479.6,801.9 481.2,800.9 482.8,799.3 484.4,797.5 486.0,795.2 487.6,792.3 489.2,789.4 490.8,786.3 492.4,784.1 494.0,783.0 495.6,782.0 497.2,781.2 498.8,779.5 500.4,776.7 502.0,774.1 503.6,771.3 505.2,768.6 506.8,766.2 508.4,764.2 510.0,762.5 511.6,761.3 513.2,759.6 514.8,757.1 516.4,753.6 518.0,750.5 519.6,748.0 521.2,746.7 522.8,745.7 524.4,744.7 526.0,742.5 527.6,740.3 529.2,737.5 530.8,734.1 532.4,731.1 534.0,727.6 535.6,725.1 537.2,723.7 538.8,722.5 540.4,721.4 542.0,719.4 543.6,717.0 545.2,714.8 546.8,712.6 548.4,709.0 550.0,705.5 551.6,702.7 553.2,700.9 554.8,699.6 556.4,698.5 558.0,696.3 559.6,693.7 561.2,691.1 562.8,688.7 564.4,685.9 566.0,683.3 567.6,680.7 569.2,678.6 570.8,677.4 572.4,675.1 574.0,673.2 575.6,670.9 577.2,668.2 578.8,665.4 580.4,664.0 582.0,662.5 583.6,660.7 585.2,659.2 586.8,657.2 588.4,655.3 590.0,653.0 591.6,650.3 593.2,647.7 594.8,644.9 596.4,642.7 598.0,641.3 599.6,641.0 601.2,640.1 602.8,638.5 604.4,636.3 606.0,633.3 607.6,630.9 609.2,628.9 610.8,627.4 612.4,625.8 614.0,624.3 615.6,622.8 617.2,620.5 618.8,618.4 620.4,615.9 622.0,614.4 623.6,613.6 625.2,612.6 626.8,612.0 628.4,610.4 630.0,608.3 631.6,606.0 633.2,603.8 634.8,602.9 636.4,602.5 638.0,602.2 639.6,601.5 641.2,600.2 642.8,598.8 644.4,597.2 646.0,595.1 647.6,593.3 649.2,591.8 650.8,590.9 652.4,589.9 654.0,588.9 655.6,587.7 657.2,586.6 658.8,585.2 660.4,583.4 662.0,582.1 663.6,581.1 665.2,580.6 666.8,580.7 668.4,580.5 670.0,579.7 671.6,578.3 673.2,577.6 674.8,577.2 676.4,576.9 678.0,575.5 679.6,573.4 681.2,572.5 682.8,573.4 684.4,575.2 686.0,575.9 687.6,574.5 689.2,572.4 690.8,571.8 692.4,573.4 694.0,574.7 695.6,573.9 697.2,572.0 698.8,570.5 700.4,571.5 702.0,573.6 703.6,574.1 705.2,572.9 706.8,571.3 708.4,571.1 710.0,573.4 711.6,575.5 713.2,575.1 714.8,573.0 716.4,570.8 718.0,571.4 719.6,573.7 721.2,575.7 722.8,576.1 724.4,575.1 726.0,575.0 727.6,577.1 729.2,579.6 730.8,580.7 732.4,580.1 734.0,579.4 735.6,580.0 737.2,581.5 738.8,582.6 740.4,583.1 742.0,582.9 743.6,583.6 745.2,585.4 746.8,587.2 748.4,588.3 750.0,588.6 751.6,589.3 753.2,589.9 754.8,591.6 756.4,593.1 758.0,594.0 759.6,594.7 761.2,595.4 762.8,597.1 764.4,598.5 766.0,599.6 767.6,600.1 769.2,601.1 770.8,602.7 772.4,604.7 774.0,607.3 775.6,608.9 777.2,610.1 778.8,610.5 780.4,611.0 782.0,612.4 783.6,614.2 785.2,616.4 786.8,618.5 788.4,620.8 790.0,622.9 791.6,624.9 793.2,626.6 794.8,627.2 796.4,627.7 798.0,629.0 799.6,630.6 801.2,632.6 802.8,635.1 804.4,637.6 806.0,639.9 807.6,642.4 809.2,644.8 810.8,646.4 812.4,647.5 814.0,648.9 815.6,650.3 817.2,652.3 818.8,655.0 820.4,657.7 822.0,660.1 823.6,662.5 825.2,664.7 826.8,665.7 828.4,668.1 830.0,669.8 831.6,672.4 833.2,675.3 834.8,677.8 836.4,680.4 838.0,682.7 839.6,684.3 841.2,685.5 842.8,686.3 844.4,688.2 846.0,691.6 847.6,695.5 849.2,698.1 850.8,700.7 852.4,703.1 854.0,705.2 855.6,705.7 857.2,706.8 858.8,709.0 860.4,712.1 862.0,715.0 863.6,717.0 865.2,719.5 866.8,722.1 868.4,724.6 870.0,726.3 871.6,728.4 873.2,730.3 874.8,732.8 876.4,735.4 878.0,738.1 879.6,740.8 881.2,743.5 882.8,745.2 884.4,746.3 886.0,747.5 887.6,748.9 889.2,751.4 890.8,754.2 892.4,756.9 894.0,760.2 895.6,763.0 897.2,765.5 898.8,767.5 900.4,768.4 902.0,769.3 903.6,771.3 905.2,772.8 906.8,774.8 908.4,777.4 910.0,780.2 911.6,783.4 913.2,785.9 914.8,788.2 916.4,789.8 918.0,790.8 919.6,791.7 921.2,793.0 922.8,794.8 924.4,796.9 926.0,798.8 927.6,802.0 929.2,804.2 930.8,805.8 932.4,806.6 934.0,808.5 935.6,810.1 937.2,812.3 938.8,815.4 940.4,817.6 942.0,819.0 943.6,820.1 945.2,821.3 946.8,822.3 948.4,823.2 950.0,824.6 951.6,827.2 953.2,830.0 954.8,832.3 956.4,834.0 958.0,835.2 959.6,836.1 961.2,837.2 962.8,838.0 964.4,839.3 966.0,841.0 967.6,842.8 969.2,844.1 970.8,845.1 972.4,846.1 974.0,846.6 975.6,847.7 977.2,849.2 978.8,850.9 980.4,851.7 982.0,852.2 983.6,853.0 985.2,854.5 986.8,855.3 988.4,855.5 990.0,855.6 991.6,856.1 993.2,857.9 994.8,860.1 996.4,861.8 998.0,862.0 999.6,861.2 1001.2,861.1 1002.8,862.4 1004.4,864.3 1006.0,864.7 1007.6,863.1 1009.2,861.6 1010.8,862.2 1012.4,864.7 1014.0,866.9 1015.6,866.2 1017.2,863.9 1018.8,862.8 1020.4,864.5 1022.0,867.6 1023.6,868.6 1025.2,866.9 1026.8,864.2 1028.4,863.6 1030.0,865.7 1031.6,867.7 1033.2,867.5 1034.8,865.4 1036.4,864.1 1038.0,864.5 1039.6,866.1 1041.2,866.9 1042.8,865.4 1044.4,862.8 1046.0,861.3 1047.6,862.3 1049.2,864.0 1050.8,863.9 1052.4,861.6 1054.0,859.3 1055.6,858.9 1057.2,860.3 1058.8,861.3 1060.4,860.5 1062.0,859.0 1063.6,857.7 1065.2,857.3 1066.8,856.9 1068.4,855.5 1070.0,853.7 1071.6,852.1 1073.2,851.6 1074.8,852.0 1076.4,852.2 1078.0,851.1 1079.6,849.1 1081.2,847.5 1082.8,846.1 1084.4,845.2 1086.0,843.9 1087.6,842.2 1089.2,841.0 1090.8,840.2 1092.4,839.5 1094.0,838.5 1095.6,837.0 1097.2,835.3 1098.8,832.9 1100.4,831.6 1102.0,831.1 1103.6,830.1 1105.2,828.9 1106.8,827.4 1108.4,825.7 1110.0,823.6 1111.6,821.0 1113.2,818.4 1114.8,816.2 1116.4,814.4 1118.0,812.9 1119.6,811.9 1121.2,811.1 1122.8,809.8 1124.4,808.9 1126.0,807.4 1127.6,804.8 1129.2,801.3 1130.8,798.4 1132.4,796.5 1134.0,795.3 1135.6,794.5 1137.2,793.5 1138.8,792.1 1140.4,789.7 1142.0,787.1 1143.6,784.2 1145.2,782.3 1146.8,780.9 1148.4,779.5 1150.0,777.6 1151.6,775.5 1153.2,773.3 1154.8,770.3 1156.4,767.1 1158.0,764.3 1159.6,762.4 1161.2,761.0 1162.8,760.3 1164.4,759.1 1166.0,757.0 1167.6,753.6 1169.2,750.4 1170.8,746.7 1172.4,743.9 1174.0,741.6 1175.6,739.6 1177.2,738.5 1178.8,738.0 1180.4,736.1 1182.0,733.2 1183.6,730.3 1185.2,727.1 1186.8,724.8 1188.4,722.3 1190.0,719.8 1191.6,717.9 1193.2,716.3 1194.8,714.3 1196.4,711.7 1198.0,708.7 1199.6,705.8 1201.2,703.0 1202.8,700.3 1204.4,697.8 1206.0,695.4 1207.6,694.0 1209.2,693.0 1210.8,691.1 1212.4,688.4 1214.0,685.2 1215.6,681.9 1217.2,679.3 1218.8,677.2 1220.4,675.6 1222.0,674.5 1223.6,672.8 1225.2,671.2 1226.8,669.1 1228.4,666.6 1230.0,662.9 1231.6,660.2 1233.2,658.1 1234.8,656.4 1236.4,654.9 1238.0,653.3 1239.6,651.5 1241.2,649.4 1242.8,647.3 1244.4,645.1 1246.0,642.7 1247.6,640.8 1249.2,638.9 1250.8,637.7 1252.4,636.9 1254.0,635.5 1255.6,633.9 1257.2,631.7 1258.8,629.5 1260.4,626.9 1262.0,624.8 1263.6,622.6 1265.2,620.9 1266.8,619.9 1268.4,619.3 1270.0,618.7 1271.6,617.1 1273.2,614.6 1274.8,611.8 1276.4,609.6 1278.0,608.2 1279.6,607.1 1281.2,606.5 1282.8,605.2 1284.4,604.1 1286.0,603.2 1287.6,601.9 1289.2,599.8 1290.8,597.5 1292.4,595.4 1294.0,594.3 1295.6,593.5 1297.2,592.8 1298.8,592.1 1300.4,591.4 1302.0,590.7 1303.6,589.6 1305.2,588.9 1306.8,588.4 1308.4,588.4" stroke="#00e600" stroke-width="1.55"/>
<path d="M442.5,191V196 M462.5,187V196 M481.5,191V196 M501.5,187V196 M521.5,191V196 M541.5,187V196 M561.5,191V196 M581.5,187V196 M600.5,191V196 M620.5,177V196 M640.5,191V196 M660.5,187V196 M680.5,191V196 M699.5,187V196 M719.5,191V196 M739.5,187V196 M759.5,191V196 M779.5,187V196 M799.5,191V196 M818.5,177V196 M838.5,191V196 M858.5,187V196 M878.5,191V196 M898.5,187V196 M918.5,191V196 M937.5,187V196 M957.5,191V196 M977.5,187V196 M997.5,191V196 M1017.5,177V196 M1036.5,191V196 M1056.5,187V196 M1076.5,191V196 M1096.5,187V196 M1116.5,191V196 M1136.5,187V196 M1155.5,191V196 M1175.5,187V196 M1195.5,191V196 M1215.5,177V196 M1235.5,191V196 M1254.5,187V196 M1274.5,191V196 M1294.5,187V196" stroke="#ffff00" stroke-width="1"/>
<path d="M422.5,177V197" stroke="#00e600" stroke-width="1.4"/>
<path d="M449.5,893V897 M466.5,888V897 M483.5,893V897 M501.5,888V897 M518.5,893V897 M535.5,888V897 M553.5,893V897 M570.5,888V897 M587.5,893V897 M605.5,878V897 M622.5,893V897 M639.5,888V897 M657.5,893V897 M674.5,888V897 M691.5,893V897 M709.5,888V897 M726.5,893V897 M743.5,888V897 M761.5,893V897 M778.5,878V897 M795.5,893V897 M813.5,888V897 M830.5,893V897 M847.5,888V897 M865.5,893V897 M882.5,888V897 M899.5,893V897 M917.5,888V897 M934.5,893V897 M951.5,878V897 M969.5,893V897 M986.5,888V897 M1003.5,893V897 M1021.5,888V897 M1038.5,893V897 M1055.5,888V897 M1073.5,893V897 M1090.5,888V897 M1107.5,893V897 M1125.5,878V897 M1142.5,893V897 M1159.5,888V897 M1177.5,893V897 M1194.5,888V897 M1212.5,893V897 M1229.5,888V897 M1246.5,893V897 M1264.5,888V897 M1281.5,893V897 M1298.5,878V897" stroke="#ffff00" stroke-width="1"/>
<path d="M431.5,878V897" stroke="#00e600" stroke-width="1.4"/>
<path d="M1049.5,177V196" stroke="#00e600" stroke-width="1.2"/><path d="M1049.5,183V193" stroke="#ff0000" stroke-width="1.2"/>
<path d="M980.5,888V897" stroke="#00e600" stroke-width="1.2"/>
</g>
<polygon points="275.75,176.5 270,187.5 281.5,187.5" fill="#c4c4c4"/>
<path d="M275.75,176.5L270,187.5" stroke="#f4f4f4" stroke-width="1" fill="none"/><path d="M270,187.5H281.5" stroke="#e0e0e0" stroke-width="1"/>
<polygon points="270,886 281.5,886 275.75,895.5" fill="#c4c4c4"/>
<path d="M270,886.5H281.5" stroke="#f4f4f4" stroke-width="1.4"/>
<polygon points="1320.5,176.5 1315,187.5 1326,187.5" fill="#c4c4c4"/>
<path d="M1320.5,176.5L1315,187.5" stroke="#f4f4f4" stroke-width="1" fill="none"/><path d="M1315,187.5H1326" stroke="#e0e0e0" stroke-width="1"/>
<polygon points="1315,886 1326,886 1320.5,895.5" fill="#c4c4c4"/>
<path d="M1315,886.5H1326" stroke="#f4f4f4" stroke-width="1.4"/>
<polygon points="170,908 180.5,902.5 180.5,913.5" fill="#c4c4c4"/>
<path d="M170,908L180.5,902.5" stroke="#f4f4f4" stroke-width="1" fill="none"/>
<polygon points="285.5,908 297,902.5 297,913.5" fill="#c4c4c4"/>
<path d="M285.5,908L297,902.5" stroke="#f4f4f4" stroke-width="1" fill="none"/>
<polygon points="419.5,908 431,902.5 431,913.5" fill="#c4c4c4"/>
<path d="M419.5,908L431,902.5" stroke="#f4f4f4" stroke-width="1" fill="none"/>
<polygon points="256,902.5 256,913.5 264.5,908" fill="#c4c4c4"/>
<path d="M256.5,902.5V913.5" stroke="#f4f4f4" stroke-width="1" fill="none"/>
<polygon points="404.5,902.5 404.5,913.5 415,908" fill="#c4c4c4"/>
<path d="M405.0,902.5V913.5" stroke="#f4f4f4" stroke-width="1" fill="none"/>
<polygon points="1300,902.5 1300,913.5 1309,908" fill="#c4c4c4"/>
<path d="M1300.5,902.5V913.5" stroke="#f4f4f4" stroke-width="1" fill="none"/>
<g stroke="#000" stroke-width="1.1" stroke-linejoin="round"><polygon points="183.4,151.3 183.4,147.6 188,147.6 189.4,145.3 194.4,145.3 196.8,147.6 196.8,157.4 193.4,151.3" fill="#ffff00"/><polygon points="181.3,151.3 193.4,151.3 196.6,158.2 184.3,158.2" fill="#dcd8d0"/></g>
<path d="M183.5,152.6h9" stroke="#fff" stroke-width="1" stroke-dasharray="1.5 1"/>
<rect x="211.2" y="148.6" width="15.4" height="10.8" fill="#eeee44" stroke="none"/><path d="M211.2,148.6V159.6H226.8V148.6" fill="none" stroke="#222" stroke-width="1.2"/><path d="M211,148.4H226.8" stroke="#888" stroke-width="1.4"/><path d="M212.6,148.2V146.2Q212.6,145.2 213.8,145.2H217.6Q218.8,145.2 218.8,146.4V148.2" fill="#d8d8e8" stroke="#9a9aa8" stroke-width="1"/><path d="M211.8,149.6H226" stroke="#fff" stroke-width="1"/><path d="M212.4,152.9L215.2,152.6L217,155.8L219.2,152.8L220.8,153.4L217.4,159L216,159Z" fill="#000080"/><path d="M219.6,154L228,144.9" stroke="#000080" stroke-width="1.1"/>
<polygon points="236.8,150 245.2,150 241,154" fill="#000"/>
<path d="M254,150.2H260.3V146.6H268.6V150.2H273M254,155H259.6V158.4H267.2V155H273" fill="none" stroke="#000" stroke-width="1.45"/>
<path d="M293.6,148.2Q296.5,145 300.2,145.4Q305.6,146.6 305.7,151Q305.5,153.6 302.6,154.6" fill="none" stroke="#000" stroke-width="1.5"/><polygon points="289.8,146.8 289.8,152 295,152" fill="#000"/><rect x="301" y="153.8" width="2.8" height="2" fill="#000"/><rect x="289" y="157" width="9.8" height="2" fill="#000"/><path d="M298.8,158H307" stroke="#fff" stroke-width="2"/><path d="M300,158H307" stroke="#000" stroke-width="2" stroke-dasharray="1.2 1.3"/>
<g fill="none" stroke="#808080" stroke-width="1.3"><path d="M322.4,144L326.6,155.5M328.2,144L324,155.5"/><ellipse cx="322" cy="157" rx="1.7" ry="2.5"/><ellipse cx="328.2" cy="156.4" rx="1.7" ry="2.6"/></g>
<g fill="#c0c0c0" stroke="#808080" stroke-width="1.1"><path d="M344.4,145.4H349.6L351.8,147.6V156.4H344.4Z"/><path d="M351.6,149.6H357.6L360.6,152.4V159.4H351.6Z"/></g><path d="M346,148.5h3M346,151h4.5M346,153.5h4.5M353.5,153h3M353.5,155h5.5M353.5,157.2h5.5" stroke="#808080" stroke-width="1.1"/>
<rect x="371.4" y="145.4" width="15.2" height="13.2" rx="1.8" fill="#808080"/><rect x="375.8" y="144.2" width="6.4" height="2.4" rx="1" fill="#808080"/><rect x="376.6" y="147.2" width="5.6" height="1.6" fill="#b0b0b0"/><path d="M379.2,152.8H386L388.8,153.2V159.6H379.2Z" fill="#c0c0c0" stroke="#808080" stroke-width="1.1"/><path d="M381,155.2h3M381,157.4h6" stroke="#808080" stroke-width="1.1"/>
<polygon points="410,143.8 410,156.8 413,154.6 416,159.8 418.2,159.8 418.2,157.9 416,153.8 418.9,152.3" fill="#ffff00"/>
<g fill="#fff"><rect x="539.4" y="143" width="3.8" height="10" rx="1.6"/><polygon points="536.4,150.8 549,149.4 549,154 544.8,158.8 533,158.8 533,155"/></g><path d="M537,151.8L533.6,155.2H544.4L548.4,150.8" stroke="#c0c0c0" stroke-width="0.9" fill="none"/><rect x="539.4" y="149" width="3.8" height="4" fill="#fff"/>
<polygon points="659.7,146 651,156.2 658.6,156.2 662,150.5" fill="#00ffff"/><path d="M659.7,146.6L667.4,155.6H651.4" fill="none" stroke="#00ffff" stroke-width="1.4"/>
<circle cx="801.2" cy="150.8" r="5.7" fill="none" stroke="#000" stroke-width="1.3"/><path d="M797.6,152.4A4.2,4.2 0 0 0 803.2,154.6" stroke="#fff" stroke-width="1" fill="none"/><path d="M805.8000000000001,155.4L810.4000000000001,161" stroke="#000" stroke-width="2.2"/><path d="M798.0,150.8H804.4000000000001" stroke="#000" stroke-width="2"/>
<circle cx="829" cy="150.8" r="5.7" fill="none" stroke="#000" stroke-width="1.3"/><path d="M825.4,152.4A4.2,4.2 0 0 0 831,154.6" stroke="#fff" stroke-width="1" fill="none"/><path d="M833.6,155.4L838.2,161" stroke="#000" stroke-width="2.2"/><path d="M825.8,150.8H832.2" stroke="#000" stroke-width="2"/>
<path d="M829,147.6V154" stroke="#000" stroke-width="2"/>
<path d="M911,162.4H920V148.4H928" stroke="#fff" stroke-width="2" fill="none"/><path d="M910,161H918.6V145.8H927.2" stroke="#000" stroke-width="1.8" fill="none"/><polygon points="918.8,147 916,150.8 921.8,150.8" fill="#0000ff"/><polygon points="916,156 921.8,156 918.8,159.4" fill="#0000ff"/><path d="M918.8,150V157" stroke="#0000ff" stroke-width="1"/><path d="M931.5,156.5V150.6H948.8" stroke="#f0f0f8" stroke-width="1.2" fill="none"/><path d="M931.5,156.6H948.8V150.6" stroke="#787888" stroke-width="1.2" fill="none"/>
<polygon points="965.8,153.2 976.8,147.2 976.8,159" fill="#0000ff"/><rect x="976" y="152.2" width="7" height="2.1" fill="#0000ff"/>
<polygon points="1010.2,153.2 999.4,147 999.4,159.2" fill="#0000ff"/><rect x="993" y="152.2" width="7" height="2.1" fill="#0000ff"/>
<path d="M1282,146.4H1293.4L1288,157" fill="none" stroke="#9c9c9c" stroke-width="1.1"/><path d="M1282,146.4L1287.6,157" stroke="#e8e8e8" stroke-width="1.1"/>
<path d="M1180.5,144V160" stroke="#000" stroke-width="1" stroke-dasharray="1 1"/><path d="M1178.6,142.8L1180.5,144.6L1182.4,142.8M1178.6,161L1180.5,159.2L1182.4,161" stroke="#000" stroke-width="0.9" fill="none"/>
<g font-family="Liberation Sans, sans-serif">
<text x="174.4" y="122.3" font-size="14" fill="#000" textLength="22.8" lengthAdjust="spacingAndGlyphs" >File</text>
<path d="M174.4,126.5H183.6" stroke="#000" stroke-width="1"/>
<text x="210.6" y="122.3" font-size="14" fill="#000" textLength="39.2" lengthAdjust="spacingAndGlyphs" >Signal</text>
<path d="M210.6,126.5H219.6" stroke="#000" stroke-width="1"/>
<text x="261.9" y="122.3" font-size="14" fill="#000" textLength="31.2" lengthAdjust="spacingAndGlyphs" >View</text>
<path d="M261.4,126.5H273" stroke="#000" stroke-width="1"/>
<text x="305.6" y="122.3" font-size="14" fill="#000" textLength="61.3" lengthAdjust="spacingAndGlyphs" >Waveform</text>
<path d="M305.6,126.5H318.2" stroke="#000" stroke-width="1"/>
<text x="379.4" y="122.3" font-size="14" fill="#000" textLength="45.4" lengthAdjust="spacingAndGlyphs" >Analog</text>
<path d="M379.6,126.5H390.6" stroke="#000" stroke-width="1"/>
<text x="437.5" y="122.3" font-size="14" fill="#000" textLength="33.1" lengthAdjust="spacingAndGlyphs" >Tools</text>
<path d="M437.5,126.5H446" stroke="#000" stroke-width="1"/>
<text x="484.4" y="122.3" font-size="14" fill="#000" textLength="48.7" lengthAdjust="spacingAndGlyphs" >Window</text>
<path d="M495.6,126.5H500" stroke="#000" stroke-width="1"/>
<text x="1292.8" y="122.3" font-size="14" fill="#000" textLength="27.8" lengthAdjust="spacingAndGlyphs" >Help</text>
<path d="M1292.8,126.5H1302.6" stroke="#000" stroke-width="1"/>
<text x="440" y="153.8" font-size="14" fill="#000" textLength="73.8" lengthAdjust="spacingAndGlyphs" >158141.697</text>
<text x="565.8" y="153.7" font-size="14" fill="#000" textLength="34" lengthAdjust="spacingAndGlyphs" >0.125</text>
<text x="677" y="156.9" font-size="14.5" fill="#000" textLength="83.6" lengthAdjust="spacingAndGlyphs" >-158141.572</text>
<text x="882.6" y="157.8" font-size="14.5" fill="#000" textLength="19.4" lengthAdjust="spacingAndGlyphs" >By:</text>
<text x="1040" y="158.7" font-size="15.5" fill="#000" textLength="39" lengthAdjust="spacingAndGlyphs" >x 1ns</text>
<text x="1113.6" y="156.8" font-size="15" fill="#000" textLength="36.6" lengthAdjust="spacingAndGlyphs" >Go to:</text>
<text x="1163" y="156.9" font-size="14.5" fill="#000" textLength="14.6" lengthAdjust="spacingAndGlyphs" >G1</text>
<text x="848" y="151.3" font-size="11.5" fill="#000" textLength="16.6" lengthAdjust="spacingAndGlyphs" font-weight="bold" style="text-shadow:1px 1px 0 #fff">100</text>
<text x="854.2" y="161.6" font-size="10.5" fill="#000" textLength="7.8" lengthAdjust="spacingAndGlyphs" font-weight="bold" style="text-shadow:1px 1px 0 #fff">%</text>
</g>
</svg>
</body></html>
